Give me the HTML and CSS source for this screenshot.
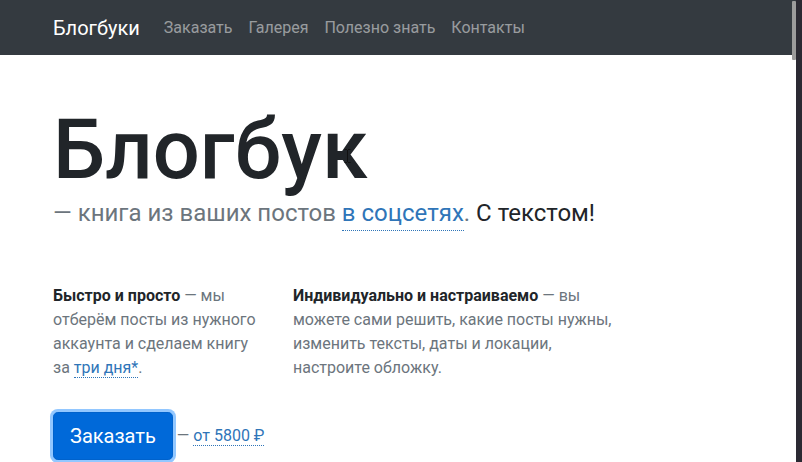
FILE: index.html
```html
<!DOCTYPE html>
<html lang="ru">
<head>
<meta charset="utf-8">
<title>Блогбуки</title>
<link rel="stylesheet" href="styles.css">
</head>
<body>
<nav class="navbar">
  <div class="container nav-inner">
    <a class="brand" href="#">Блогбуки</a>
    <ul class="nav">
      <li><a href="#">Заказать</a></li>
      <li><a href="#">Галерея</a></li>
      <li><a href="#">Полезно знать</a></li>
      <li><a href="#">Контакты</a></li>
    </ul>
  </div>
</nav>
<main class="container">
  <h1 class="title">Блогбук</h1>
  <p class="lead">— книга из ваших постов <a class="dotted" href="#">в соцсетях</a>. <span class="dark">С текстом!</span></p>
  <div class="row">
    <p class="col col-a"><b>Быстро и просто</b> — мы отберём посты из нужного аккаунта и сделаем книгу за <a class="dotted" href="#">три дня*</a>.</p>
    <p class="col col-b"><b>Индивидуально и настраиваемо</b> — вы можете сами решить, какие посты нужны, изменить тексты, даты и локации, настроите обложку.</p>
  </div>
  <div class="cta">
    <a class="btn" href="#">Заказать</a>
    <span class="price">— <a class="dotted" href="#">от 5800 ₽</a></span>
  </div>
</main>
<div class="cursor"><svg width="7" height="14" viewBox="0 0 7 14"><path d="M0.5 0.5h2.5M4 0.5h2.5M3.5 1v12M0.5 13.5h2.5M4 13.5h2.5" stroke="#111" stroke-width="1" fill="none"/></svg></div>
<div class="scroll-track"></div>
<div class="scroll-thumb"></div>
</body>
</html>
```
FILE: styles.css
```css
* { box-sizing: border-box; }
html, body { margin: 0; padding: 0; }
body {
  font-family: Roboto, "Noto Sans", sans-serif;
  font-size: 16px;
  line-height: 1.5;
  color: #212529;
  background: #fff;
  width: 796px;
  height: 462px;
  overflow: hidden;
}
a { text-decoration: none; }
.container {
  width: 720px;
  margin: 0 auto;
  padding: 0 15px;
}
.navbar {
  background: #343a40;
  height: 55px;
  display: flex;
  align-items: center;
}
.nav-inner {
  display: flex;
  align-items: center;
}
.brand {
  color: #fff;
  font-size: 20px;
  line-height: 30px;
  margin-right: 16px;
}
.nav {
  display: flex;
  list-style: none;
  margin: 0;
  padding: 0;
}
.nav a {
  display: block;
  padding: 8px;
  color: rgba(255,255,255,.5);
}
.title {
  font-size: 83px;
  font-weight: 500;
  line-height: 99px;
  margin: 45px 0 0;
}
.lead {
  font-size: 24px;
  line-height: 29px;
  margin: 0;
  color: #6c757d;
}
.dotted {
  color: #2f75b8;
  border-bottom: 1px dotted #2f75b8;
}
.lead .dotted { padding-bottom: 3px; }
.dark { color: #212529; }
.row {
  display: flex;
  margin-top: 56px;
}
.col {
  margin: 0;
  color: #6c757d;
}
.col b { font-weight: 700; color: #212529; }
.col-a { width: 210px; margin-right: 30px; }
.col-b { width: 330px; }
.cta {
  margin-top: 32px;
  display: flex;
  align-items: center;
}
.btn {
  display: inline-block;
  background: #0069d9;
  color: #fff;
  font-size: 20px;
  line-height: 30px;
  padding: 8px 16px;
  border: 1px solid #0062cc;
  border-radius: 4.8px;
  box-shadow: 0 0 0 3px rgba(38,143,255,.5);
}
.price {
  margin-left: 4px;
  color: #6c757d;
}
.cursor {
  position: absolute;
  left: 344px;
  top: 149px;
  line-height: 0;
}
.scroll-track {
  position: fixed;
  right: 0;
  top: 0;
  width: 6px;
  height: 462px;
  background: #2b2a33;
}
.scroll-thumb {
  position: fixed;
  left: 792px;
  top: 1px;
  width: 4px;
  height: 59px;
  background: #9c9c9c;
  border-radius: 1px;
}
```
